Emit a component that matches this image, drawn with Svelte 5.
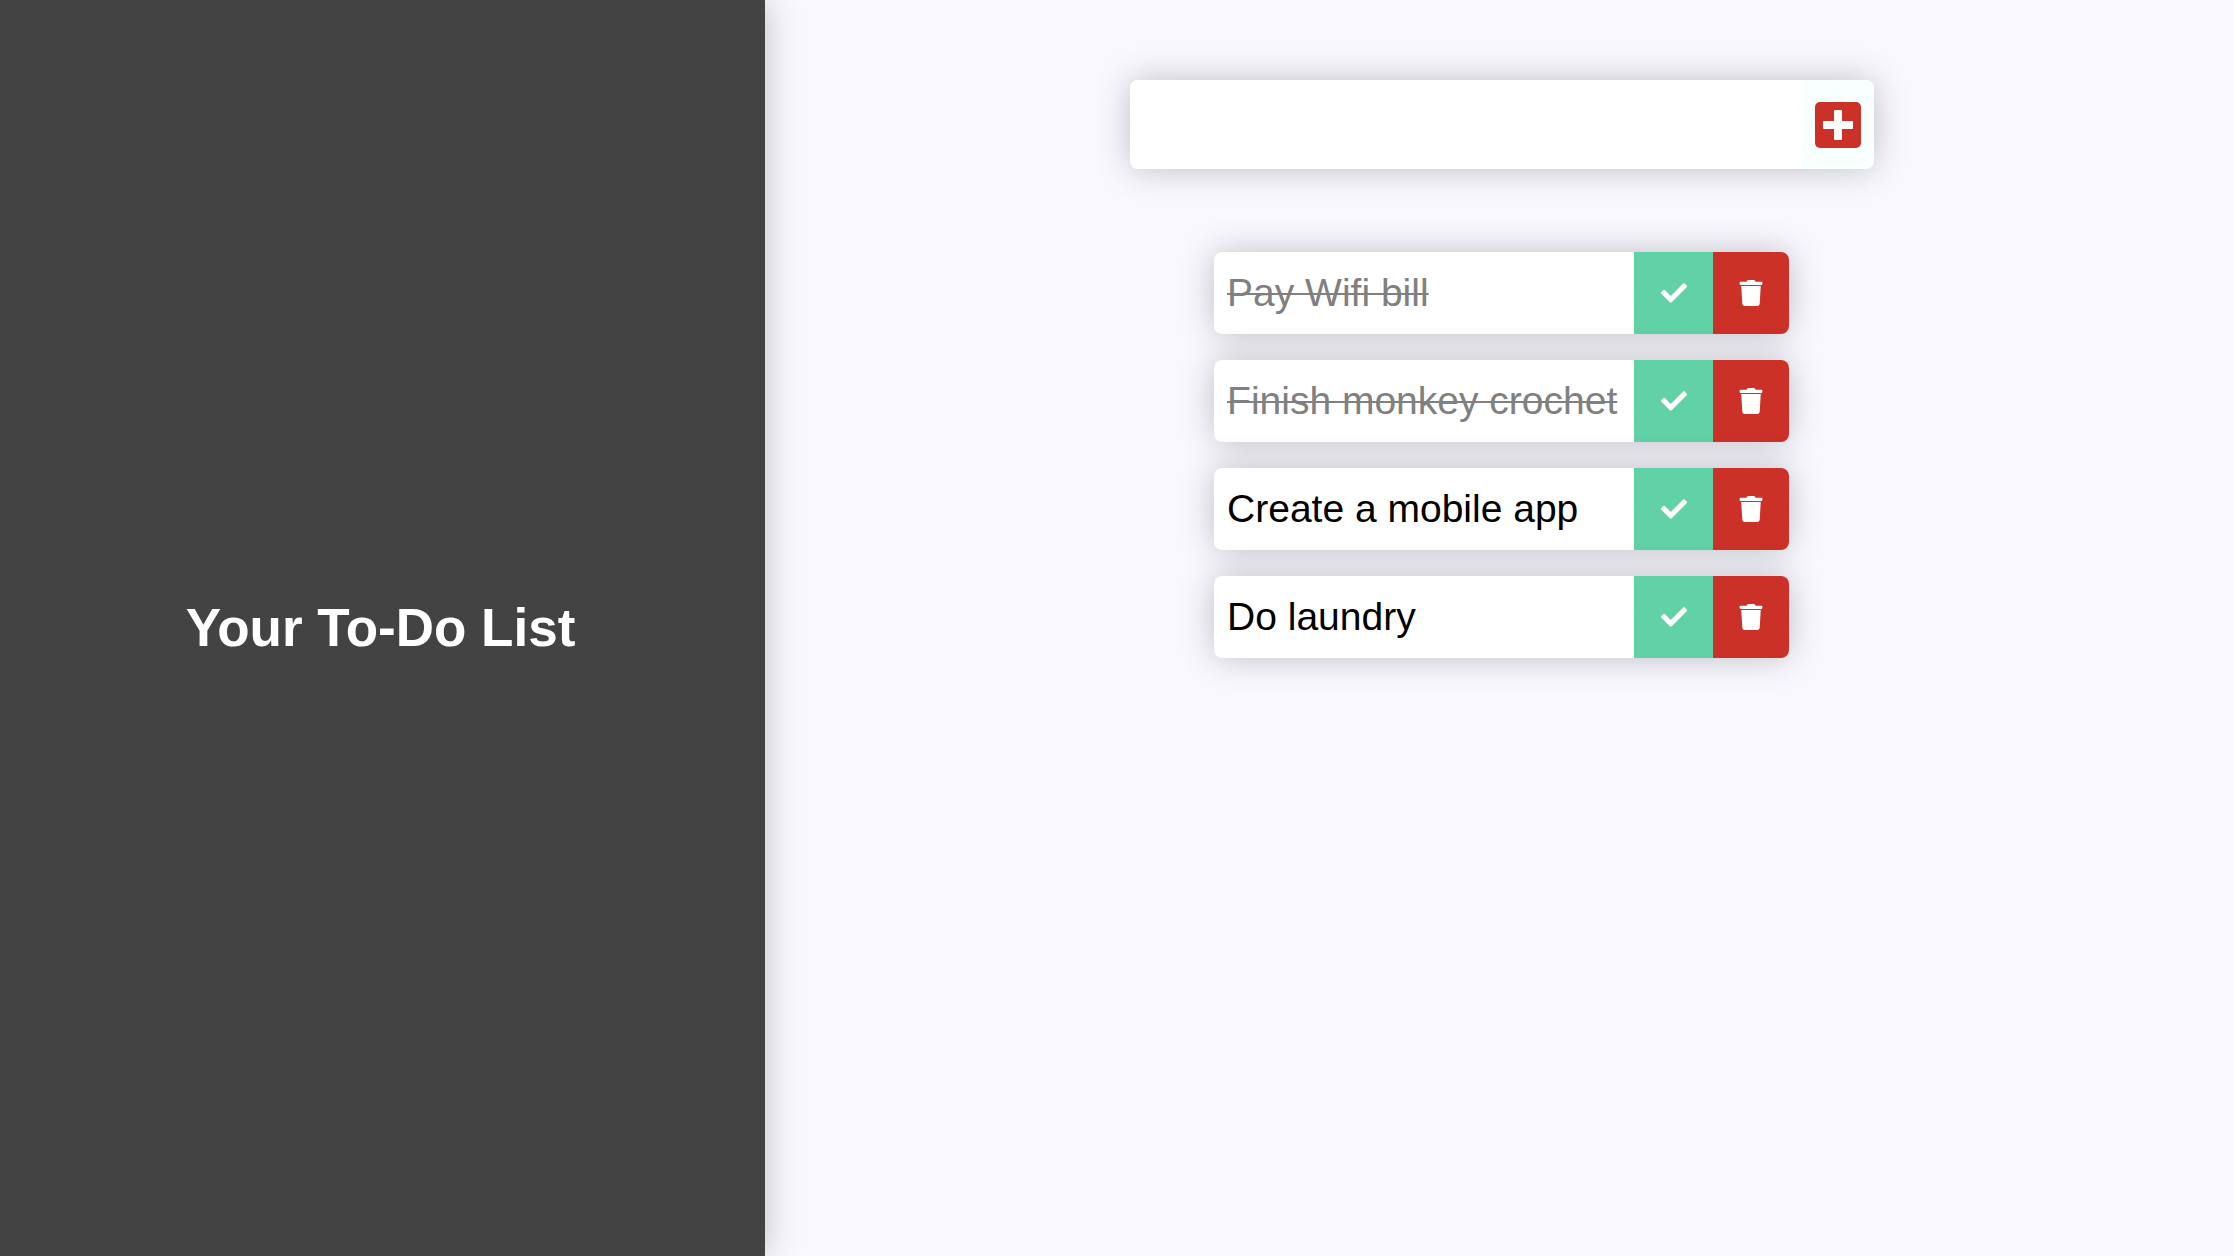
<script>
  let draft = $state('');
  let nextId = 5;
  let todos = $state([
    { id: 1, text: 'Pay Wifi bill', done: true },
    { id: 2, text: 'Finish monkey crochet', done: true },
    { id: 3, text: 'Create a mobile app', done: false },
    { id: 4, text: 'Do laundry', done: false },
  ]);

  function add(event) {
    event.preventDefault();
    const text = draft.trim();
    if (!text) return;
    todos.push({ id: nextId++, text, done: false });
    draft = '';
  }

  function remove(id) {
    todos = todos.filter((todo) => todo.id !== id);
  }
</script>

<div class="page">
  <header class="side">
    <h1>Your To-Do List</h1>
  </header>

  <main class="content">
    <form class="entry" onsubmit={add}>
      <input type="text" aria-label="New to-do" bind:value={draft} />
      <button class="add" type="submit" aria-label="Add to-do">
        <svg class="plus" viewBox="0 0 46 46" aria-hidden="true">
          <rect width="46" height="46" rx="5" fill="#cc3128" />
          <path d="M20 8h6q1 0 1 1v10h10q1 0 1 1v6q0 1-1 1H27v10q0 1-1 1h-6q-1 0-1-1V27H9q-1 0-1-1v-6q0-1 1-1h10V9q0-1 1-1z" fill="#fff" />
        </svg>
      </button>
    </form>

    <ul class="list">
      {#each todos as todo (todo.id)}
        <li class="todo">
          <span class="text" class:done={todo.done}>{todo.text}</span>
          <button class="check" type="button" aria-label="Toggle {todo.text}" aria-pressed={todo.done} onclick={() => (todo.done = !todo.done)}>
            <svg class="icon" viewBox="0 0 512 512" aria-hidden="true">
              <path d="M173.9 439.4l-166.4-166.4c-10-10-10-26.2 0-36.2l36.2-36.2c10-10 26.2-10 36.2 0L192 312.7 432.1 72.6c10-10 26.2-10 36.2 0l36.2 36.2c10 10 10 26.2 0 36.2l-294.4 294.4c-10 10-26.2 10-36.2 0z" />
            </svg>
          </button>
          <button class="trash" type="button" aria-label="Delete {todo.text}" onclick={() => remove(todo.id)}>
            <svg class="icon" viewBox="0 0 512 512" aria-hidden="true">
              <path d="M464 32H344l-9.4-18.7A24 24 0 0 0 313.1 0H198.8a23.7 23.7 0 0 0-21.4 13.3L168 32H48a16 16 0 0 0-16 16v32a16 16 0 0 0 16 16h416a16 16 0 0 0 16-16V48a16 16 0 0 0-16-16zM64 120l21.2 347a48 48 0 0 0 47.9 45h245.8a48 48 0 0 0 47.9-45L448 120z" />
            </svg>
          </button>
        </li>
      {/each}
    </ul>
  </main>
</div>

<style>
  :global(body) {
    margin: 0;
    background: #f9f8ff;
    font-family: Arial, "Liberation Sans", sans-serif;
  }

  .page {
    display: flex;
    min-height: 100vh;
    color: #000;
    --shadow: 0 0 34px rgba(0, 0, 0, 0.23);
  }

  .side {
    flex: 0 0 34.25%;
    display: flex;
    align-items: center;
    justify-content: center;
    box-sizing: border-box;
    padding-right: 4px;
    background: #434343;
    color: #fff;
    box-shadow: var(--shadow);
  }

  h1 {
    margin: 0;
    font-size: 53px;
    line-height: 60px;
  }

  .content {
    flex: 1;
    display: flex;
    flex-direction: column;
    align-items: center;
    gap: 83px;
    padding: 80px 0 80px 4px;
  }

  .entry {
    display: flex;
    box-sizing: border-box;
    width: 50.8%;
    height: 89px;
    border-radius: 8px;
    box-shadow: var(--shadow);
  }

  input {
    flex: 1;
    min-width: 0;
    border: 0;
    border-radius: 8px 0 0 8px;
    padding: 0 13px;
    background: #fff;
    font: inherit;
    font-size: 39px;
    outline: 0;
  }

  button {
    display: flex;
    align-items: center;
    justify-content: center;
    border: 0;
    padding: 0;
    color: #fff;
    cursor: pointer;
  }

  .add {
    width: 72px;
    border-radius: 0 8px 8px 0;
    background: #f8ffff;
  }

  .plus {
    width: 46px;
    height: 46px;
  }

  .list {
    display: flex;
    flex-direction: column;
    gap: 26px;
    margin: 0;
    padding: 0;
    list-style: none;
  }

  .todo {
    display: flex;
    min-height: 82px;
    border-radius: 8px;
    background: #fff;
    box-shadow: var(--shadow);
  }

  .text {
    flex: 1;
    box-sizing: border-box;
    min-width: 420px;
    padding: 18px 13px;
    font-size: 39px;
    line-height: 46px;
  }

  .done {
    color: #808080;
    text-decoration: line-through 2px;
  }

  .check {
    width: 79px;
    background: #61d1a6;
  }

  .trash {
    width: 76px;
    border-radius: 0 8px 8px 0;
    background: #cc3128;
  }

  .icon {
    width: 26px;
    height: 26px;
    fill: currentColor;
  }
</style>
